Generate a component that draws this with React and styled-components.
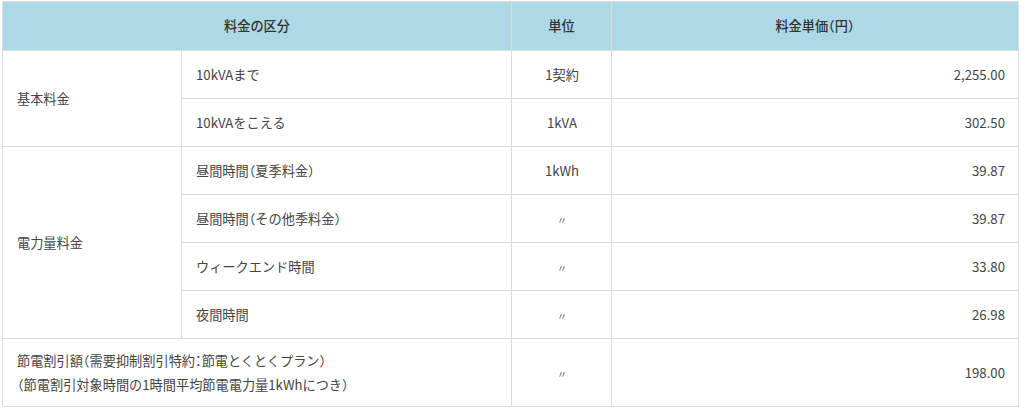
import React from "react";
import styled, { createGlobalStyle } from "styled-components";

const GlobalStyle = createGlobalStyle`
  body {
    margin: 0;
    background: #fff;
    font-family: "Noto Sans CJK JP", "Noto Sans", sans-serif;
    color: #444;
  }
`;

// full-width brackets and colon are set half-width, as in the original
const Jp = ({ children }) =>
  String(children)
    .split(/([（）：])/)
    .map((part, i) =>
      /^[（）：]$/.test(part) ? <Punct key={i}>{part}</Punct> : part
    );

const rows = [
  { group: "基本料金", span: 2, label: "10kVAまで", unit: "1契約", price: "2,255.00" },
  { label: "10kVAをこえる", unit: "1kVA", price: "302.50" },
  { group: "電力量料金", span: 4, label: "昼間時間（夏季料金）", unit: "1kWh", price: "39.87" },
  { label: "昼間時間（その他季料金）", unit: "〃", price: "39.87" },
  { label: "ウィークエンド時間", unit: "〃", price: "33.80" },
  { label: "夜間時間", unit: "〃", price: "26.98" },
];

const App = () => {
  return (
    <Wrap>
      <GlobalStyle />
      <Table>
        <colgroup>
          <col style={{ width: 179 }} />
          <col style={{ width: 330 }} />
          <col style={{ width: 100 }} />
          <col />
        </colgroup>
        <thead>
          <tr>
            <Th colSpan={2}>料金の区分</Th>
            <Th>単位</Th>
            <Th><Jp>料金単価（円）</Jp></Th>
          </tr>
        </thead>
        <tbody>
          {rows.map((r, i) => (
            <tr key={i}>
              {r.group && <Td rowSpan={r.span}>{r.group}</Td>}
              <Td><Jp>{r.label}</Jp></Td>
              <Td $align="center">{r.unit === "〃" ? <Ditto>〃</Ditto> : r.unit}</Td>
              <Td $align="right">{r.price}</Td>
            </tr>
          ))}
          <tr>
            <Td colSpan={2} $tall>
              <Jp>節電割引額（需要抑制割引特約：節電とくとくプラン）</Jp>
              <br />
              <Jp>（節電割引対象時間の1時間平均節電電力量1kWhにつき）</Jp>
            </Td>
            <Td $align="center" $tall><Ditto>〃</Ditto></Td>
            <Td $align="right" $tall>198.00</Td>
          </tr>
        </tbody>
      </Table>
    </Wrap>
  );
};

export default App;

const Wrap = styled.div`
  padding: 1px 0 0 2px;
`;

const Table = styled.table`
  width: 1017px;
  border-collapse: collapse;
  table-layout: fixed;
  font-size: 13.2px;
  line-height: 1.75;
`;

const Punct = styled.span`
  font-feature-settings: "halt";
`;

const Th = styled.th`
  background: #add8e6;
  border: 1px solid #dcdcdc;
  height: 48px;
  padding: 0 14px;
  font-weight: 500;
  color: #333;
  text-align: center;
`;

const Td = styled.td`
  border: 1px solid #dcdcdc;
  height: ${(p) => (p.$tall ? "67px" : "47px")};
  padding: 0 13px 0 14px;
  text-align: ${(p) => p.$align || "left"};
  vertical-align: middle;
  color: #444;
`;

const Ditto = styled.span`
  font-size: 10px;
  color: #666;
`;
